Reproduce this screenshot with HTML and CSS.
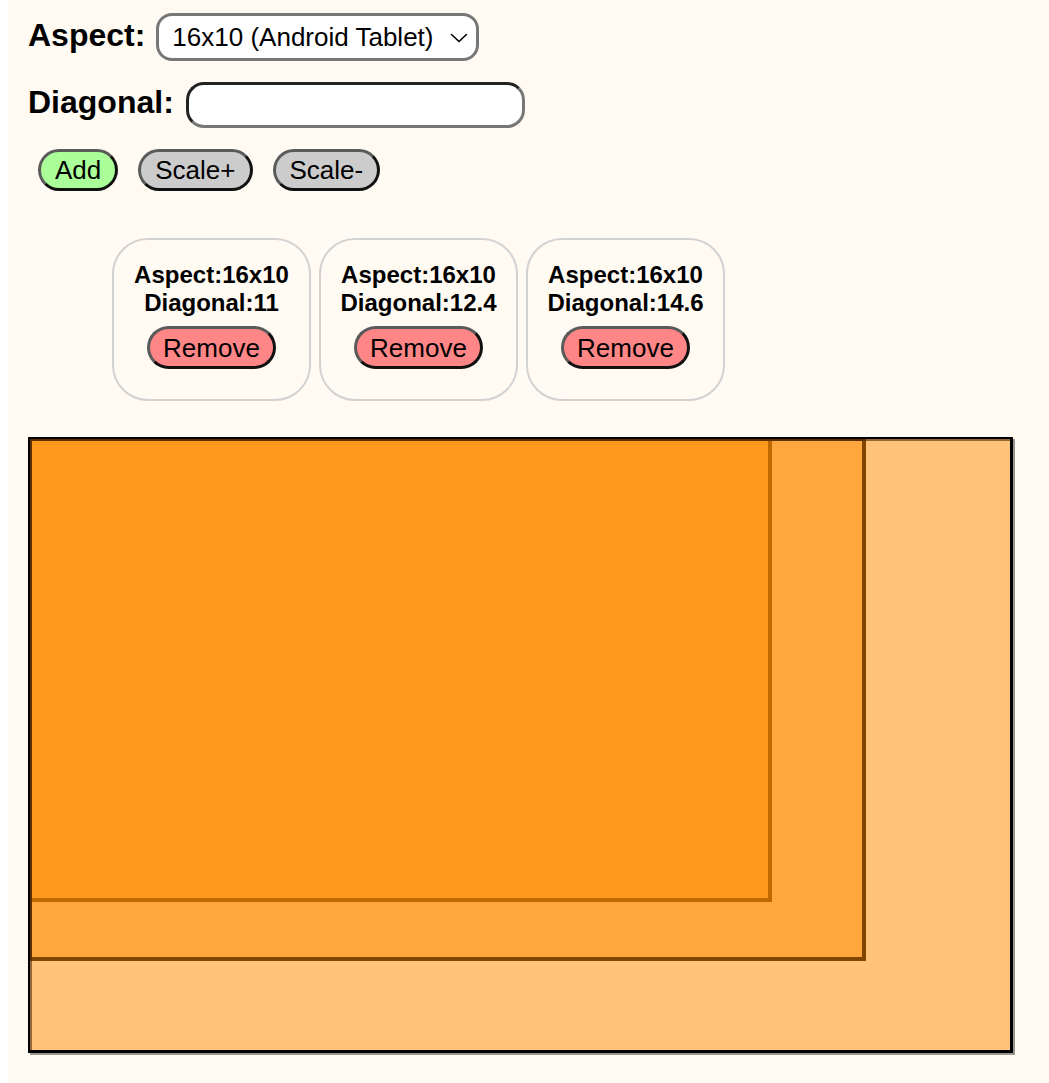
FILE: index.html
```html
<!DOCTYPE html>
<html>
<head>
<meta charset="utf-8">
<title>Screen sizes</title>
<link rel="stylesheet" href="styles.css">
</head>
<body>
<div class="page">
  <div class="row row-aspect">
    <label class="lbl" for="aspect">Aspect:</label>
    <div class="sel-wrap">
      <select id="aspect" class="sel"><option>16x10 (Android Tablet)</option></select>
      <svg class="chev" width="18" height="10" viewBox="0 0 18 10" aria-hidden="true"><path d="M1.5 1.5 L9 8.5 L16.5 1.5" fill="none" stroke="#000" stroke-width="1.6" stroke-linecap="round" stroke-linejoin="round"/></svg>
    </div>
  </div>
  <div class="row row-diag">
    <label class="lbl" for="diag">Diagonal:</label>
    <input id="diag" class="inp" type="text">
  </div>
  <div class="btns">
    <button class="btn btn-add">Add</button>
    <button class="btn btn-scale">Scale+</button>
    <button class="btn btn-scale">Scale-</button>
  </div>
  <div class="cards">
    <div class="card">
      <div class="card-line">Aspect:16x10</div>
      <div class="card-line">Diagonal:11</div>
      <button class="btn btn-remove">Remove</button>
    </div>
    <div class="card">
      <div class="card-line">Aspect:16x10</div>
      <div class="card-line">Diagonal:12.4</div>
      <button class="btn btn-remove">Remove</button>
    </div>
    <div class="card">
      <div class="card-line">Aspect:16x10</div>
      <div class="card-line">Diagonal:14.6</div>
      <button class="btn btn-remove">Remove</button>
    </div>
  </div>
  <div class="stage">
    <div class="rect" style="width:744px;height:465px"></div>
    <div class="rect" style="width:838px;height:524px"></div>
    <div class="rect rect-outer" style="width:985px;height:616px"></div>
  </div>
</div>
</body>
</html>
```
FILE: styles.css
```css
html, body {
  margin: 0;
  padding: 0;
  background: #ffffff;
}
body {
  margin-left: 8px;
  font-family: "Liberation Sans", Arial, sans-serif;
  color: #000;
}
.page {
  background: #fffaf2;
  min-height: 1083px;
  padding: 12px 0 20px 20px;
  box-sizing: border-box;
}
.row {
  display: flex;
  align-items: center;
  gap: 11px;
}
.row-aspect {
  height: 50px;
}
.row-diag {
  margin-top: 19px;
  height: 48px;
  gap: 12px;
}
.lbl {
  font-size: 32px;
  font-weight: bold;
  line-height: 36px;
  position: relative;
  top: -2px;
}
.row-diag .lbl {
  top: -3px;
}
.sel-wrap {
  position: relative;
  width: 323px;
  height: 48px;
}
.sel {
  -webkit-appearance: none;
  appearance: none;
  font-family: "Liberation Sans", Arial, sans-serif;
  font-size: 26px;
  color: #000;
  width: 323px;
  height: 48px;
  box-sizing: border-box;
  border: 3px solid #777;
  border-radius: 16px;
  background-color: #fff;
  padding: 0 36px 0 13px;
  margin: 0;
}
.chev {
  position: absolute;
  right: 11px;
  top: 20px;
  pointer-events: none;
}
.inp {
  font-family: "Liberation Sans", Arial, sans-serif;
  font-size: 16px;
  width: 339px;
  height: 46px;
  box-sizing: border-box;
  border: 3px solid;
  border-color: #222 #777 #777 #222;
  border-radius: 18px;
  background: #fff;
  padding: 0 12px;
  margin: 0;
  outline: none;
}
.btns {
  display: flex;
  gap: 20px;
  margin-top: 20px;
  padding-left: 10px;
}
.btn {
  font-family: "Liberation Sans", Arial, sans-serif;
  font-size: 26px;
  line-height: 30px;
  color: #000;
  padding: 3px 14px;
  margin: 0;
  border: 3px solid;
  border-color: #5a5a5a #111 #111 #5a5a5a;
  border-radius: 22px;
  cursor: pointer;
}
.btn-add {
  background: #aaff99;
}
.btn-scale {
  background: #cccccc;
}
.btn-remove {
  background: #ff8686;
  padding: 4px 13px 3px;
  margin-top: 9px;
}
.cards {
  display: flex;
  gap: 8px;
  margin-top: 47px;
  padding-left: 84px;
}
.card {
  width: 199px;
  height: 163px;
  box-sizing: border-box;
  border: 2px solid #d2d2d2;
  border-radius: 36px;
  padding: 21px 0 30px;
  display: flex;
  flex-direction: column;
  align-items: center;
}
.card-line {
  font-size: 24px;
  font-weight: bold;
  line-height: 28px;
}
.stage {
  position: relative;
  width: 985px;
  height: 616px;
  margin-top: 36px;
  box-shadow: 2px 2px 0 rgba(0, 0, 0, 0.4);
}
.rect {
  position: absolute;
  left: 0;
  top: 0;
  box-sizing: border-box;
  border: 4px solid #000;
  background: rgba(255, 140, 0, 0.5);
}
.rect-outer {
  border-width: 2px 3px 3px 2px;
  box-shadow: inset 2px 2px 0 rgba(60, 30, 0, 0.55);
}
```
